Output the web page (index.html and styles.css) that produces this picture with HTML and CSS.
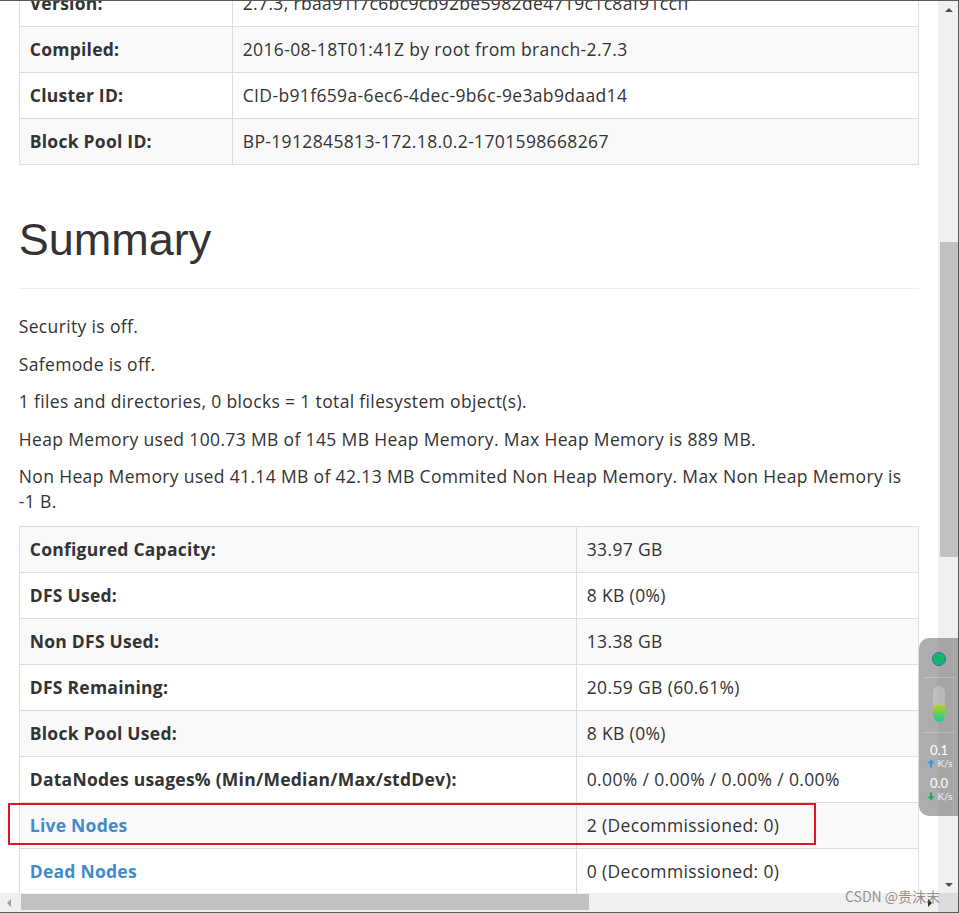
FILE: index.html
```html
<!DOCTYPE html>
<html>
<head>
<meta charset="utf-8">
<title>Namenode information</title>
<link rel="stylesheet" href="styles.css">
</head>
<body>
<div class="frame">
  <div class="main">
    <div class="viewport">
      <div class="page">
        <table class="table t1">
          <colgroup><col class="c1"><col></colgroup>
          <tbody>
            <tr><th>Version:</th><td>2.7.3, rbaa91f7c6bc9cb92be5982de4719c1c8af91ccff</td></tr>
            <tr class="alt"><th>Compiled:</th><td>2016-08-18T01:41Z by root from branch-2.7.3</td></tr>
            <tr><th>Cluster ID:</th><td>CID-b91f659a-6ec6-4dec-9b6c-9e3ab9daad14</td></tr>
            <tr class="alt"><th>Block Pool ID:</th><td>BP-1912845813-172.18.0.2-1701598668267</td></tr>
          </tbody>
        </table>

        <div class="page-header"><h1>Summary</h1></div>

        <p>Security is off.</p>
        <p>Safemode is off.</p>
        <p>1 files and directories, 0 blocks = 1 total filesystem object(s).</p>
        <p>Heap Memory used 100.73 MB of 145 MB Heap Memory. Max Heap Memory is 889 MB.</p>
        <p class="last">Non Heap Memory used 41.14 MB of 42.13 MB Commited Non Heap Memory. Max Non Heap Memory is -1 B.</p>

        <table class="table t2">
          <colgroup><col class="c2"><col></colgroup>
          <tbody>
            <tr class="alt"><th>Configured Capacity:</th><td>33.97 GB</td></tr>
            <tr><th>DFS Used:</th><td>8 KB (0%)</td></tr>
            <tr class="alt"><th>Non DFS Used:</th><td>13.38 GB</td></tr>
            <tr><th>DFS Remaining:</th><td>20.59 GB (60.61%)</td></tr>
            <tr class="alt"><th>Block Pool Used:</th><td>8 KB (0%)</td></tr>
            <tr><th>DataNodes usages% (Min/Median/Max/stdDev):</th><td>0.00% / 0.00% / 0.00% / 0.00%</td></tr>
            <tr class="alt"><th><a href="#">Live Nodes</a></th><td>2 (Decommissioned: 0)</td></tr>
            <tr><th><a href="#">Dead Nodes</a></th><td>0 (Decommissioned: 0)</td></tr>
          </tbody>
        </table>
      </div>
    </div>
    <div class="vscroll">
      <div class="sbtn"><svg width="10" height="6" viewBox="0 0 10 6"><polygon points="1,5 9,5 5,1" fill="#505050"/></svg></div>
      <div class="vspace"></div>
      <div class="vthumb"></div>
      <div class="vrest"></div>
      <div class="sbtn"><svg width="10" height="6" viewBox="0 0 10 6"><polygon points="1,1 9,1 5,5" fill="#505050"/></svg></div>
    </div>
  </div>
  <div class="hscroll">
    <div class="hbtn"><svg width="6" height="10" viewBox="0 0 6 10"><polygon points="5,1 5,9 1,5" fill="#a0a0a0"/></svg></div>
    <div class="hspace"></div>
    <div class="hthumb"></div>
    <div class="hrest"></div>
    <div class="hbtn"><svg width="6" height="10" viewBox="0 0 6 10"><polygon points="1,1 1,9 5,5" fill="#303030"/></svg></div>
    <div class="corner"></div>
  </div>

  <div class="annot"></div>

  <div class="widget">
    <div class="dot"></div>
    <div class="wline"></div>
    <div class="pill"><div class="pillfill"></div></div>
    <div class="wline"></div>
    <div class="speed">0.1</div>
    <div class="unit"><svg width="8" height="9" viewBox="0 0 8 9"><path d="M4 0.5 L7.5 4.5 H5 V8.5 H3 V4.5 H0.5 Z" fill="#1e9bff"/></svg>K/s</div>
    <div class="speed s2">0.0</div>
    <div class="unit"><svg width="8" height="9" viewBox="0 0 8 9"><path d="M4 8.5 L7.5 4.5 H5 V0.5 H3 V4.5 H0.5 Z" fill="#12b05a"/></svg>K/s</div>
  </div>

  <div class="watermark">CSDN @贵沫末</div>
</div>
</body>
</html>
```

FILE: styles.css
```css
* { box-sizing: border-box; }
html, body { margin: 0; padding: 0; background: #fff; }

.frame {
  position: relative;
  width: 959px;
  height: 913px;
  border-top: 1px solid #5a5a5a;
  border-right: 1px solid #5a5a5a;
  border-bottom: 1px solid #5a5a5a;
  display: flex;
  flex-direction: column;
  overflow: hidden;
}
.main { flex: 1; display: flex; min-height: 0; }
.viewport { flex: 1; overflow: hidden; background: #fff; }

.page {
  width: 937.5px;
  padding: 0 18.75px;
  margin-top: -21px;
  font-family: "Open Sans", "Noto Sans", sans-serif;
  font-size: 17.5px;
  line-height: 25px;
  color: #333;
  letter-spacing: 0.35px;
}

.table {
  width: 100%;
  border-collapse: collapse;
  border: 1px solid #ddd;
  margin-bottom: 25px;
  table-layout: fixed;
}
.t1 .c1 { width: 213px; }
.t2 .c2 { width: 557px; }
.table th, .table td {
  padding: 10px;
  border: 1px solid #ddd;
  text-align: left;
  vertical-align: top;
  white-space: nowrap;
  overflow: hidden;
}
.table th { font-weight: 700; letter-spacing: 0.25px; }
.table tr.alt { background: #f9f9f9; }
.table a { color: #428bca; text-decoration: none; }

.page-header {
  margin: 50px 0 25px;
  padding-bottom: 11.25px;
  border-bottom: 1px solid #eee;
}
.page-header h1 {
  margin: 25px 0 12.5px;
  font-family: "Liberation Sans", Arial, sans-serif;
  font-weight: 500;
  font-size: 45px;
  line-height: 49.5px;
  letter-spacing: 0;
  color: #333;
}
.page p { margin: 0 0 12.5px; }
.page p.last { margin-bottom: 12px; }

/* vertical scrollbar */
.vscroll {
  width: 20px;
  background: #f0f0f0;
  display: flex;
  flex-direction: column;
}
.sbtn { height: 17px; display: flex; align-items: center; justify-content: center; padding-left: 2px; }
.vspace { height: 224px; }
.vthumb { height: 315px; margin-left: 2px; background: #c1c1c1; }
.vrest { flex: 1; }

/* horizontal scrollbar */
.hscroll {
  height: 19px;
  display: flex;
  background: #f0f0f0;
}
.hbtn { width: 17px; display: flex; align-items: center; justify-content: center; }
.hspace { width: 4px; }
.hthumb { width: 568px; margin: 1px 0 2px; background: #c1c1c1; }
.hrest { flex: 1; }
.corner { width: 20px; background: #dcdcdc; }

/* annotation */
.annot {
  position: absolute;
  left: 8px;
  top: 802px;
  width: 808px;
  height: 42px;
  border: 2px solid #e0141e;
}

/* network widget */
.widget {
  position: absolute;
  left: 919px;
  top: 637px;
  width: 40px;
  height: 178px;
  border-radius: 10px 0 0 10px;
  background: rgba(105, 105, 105, 0.55);
  display: flex;
  flex-direction: column;
  align-items: center;
  font-family: "Lato", "Noto Sans", sans-serif;
  color: #fff;
}
.dot {
  width: 14px;
  height: 14px;
  margin-top: 14px;
  border-radius: 50%;
  background: #12b866;
  border: 1px solid #2a6cb0;
}
.wline { width: 32px; height: 1px; background: rgba(255,255,255,0.25); margin-top: 11px; }
.pill {
  margin-top: 8px;
  width: 12px;
  height: 36px;
  border-radius: 6px;
  background: rgba(255,255,255,0.22);
  display: flex;
  flex-direction: column;
  justify-content: flex-end;
  overflow: hidden;
}
.pillfill { height: 17px; background: linear-gradient(#b4d21c, #21c3a6); border-radius: 0 0 6px 6px; }
.pill + .wline { margin-top: 10px; }
.speed { margin-top: 11px; font-size: 13px; line-height: 13px; }
.speed.s2 { margin-top: 8px; }
.unit { font-size: 10px; line-height: 11px; margin-top: 1px; color: #f2f2f2; display: flex; align-items: center; gap: 2px; padding-left: 2px; }

.watermark {
  position: absolute;
  left: 845px;
  top: 886px;
  font-family: "Noto Sans CJK SC", "Noto Sans", sans-serif;
  font-size: 14px;
  line-height: 18px;
  color: rgba(110, 110, 110, 0.75);
  white-space: nowrap;
}
```
